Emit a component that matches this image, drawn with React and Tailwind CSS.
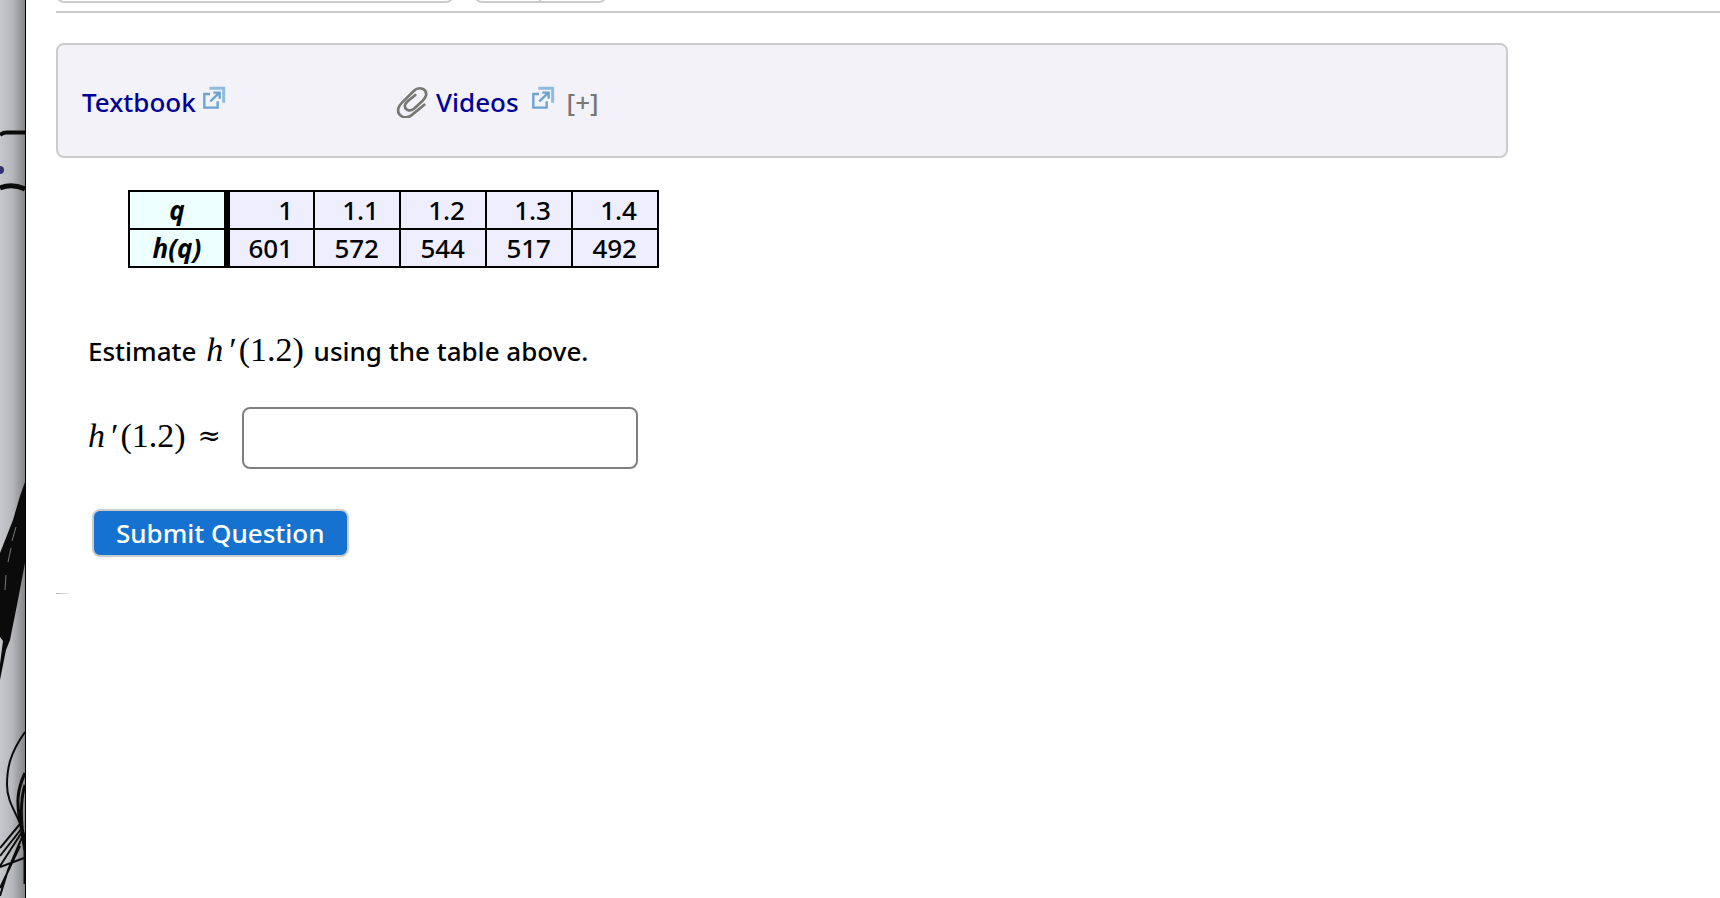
const columns = [
  { q: "1", h: "601" },
  { q: "1.1", h: "572" },
  { q: "1.2", h: "544" },
  { q: "1.3", h: "517" },
  { q: "1.4", h: "492" },
];

function ExternalIcon() {
  return (
    <svg className="mt-0.5 h-6 w-6" viewBox="18 18 72 72" fill="none" aria-hidden="true">
      <path d="M40 25H83V68" stroke="#8fbbdf" strokeWidth="9" />
      <path d="M42 42H25V83H65V64" stroke="#6ba3d0" strokeWidth="7" />
      <path d="M43 64L68 40M52 38H71V56" stroke="#6ba3d0" strokeWidth="7" />
    </svg>
  );
}

function PaperclipIcon() {
  return (
    <svg className="h-8 w-8" viewBox="12 15 96 96" fill="none" stroke="#777773" strokeWidth="8" strokeLinecap="round" aria-hidden="true">
      <path d="M97 71L58 103C38 117 14 104 19 82C21 75 25 70 30 65L65 30C82 14 106 24 102 44C100 51 96 55 92 59L66 83C52 95 34 84 40 70C41 66 44 64 47 61L70 42" />
    </svg>
  );
}

// h'(1.2) in a math face
function Derivative() {
  return (
    <span className="font-['Liberation_Serif',serif] text-[34px] leading-9 font-normal">
      <i>h</i><i className="mx-1">′</i>(1.2)
    </span>
  );
}

function Sketch() {
  return (
    <aside className="w-[26px] shrink-0 overflow-hidden border-r border-black bg-linear-to-r from-[#c6c7ca] via-[#b6b7ba] to-[#858688]">
      <svg className="block h-[898px] w-[25px]" viewBox="0 0 25 898" fill="none" stroke="#0b0b0b" aria-hidden="true">
        <path d="M0 135Q3 132 8 132.500H25" strokeWidth="4" />
        <ellipse cx="0" cy="170" rx="4" ry="4" fill="#33316f" stroke="none" />
        <path d="M0 188Q12 183 25 189" strokeWidth="5" />
        <path d="M25 482L20 496L13 520L0 553V637L3 641L0 664V680L6 650L10 640L17 605L25 563Z" fill="#0b0b0b" stroke="none" />
        <path d="M11 548L8 562M16 527L12 541M6 575L5 590" stroke="#77787a" strokeWidth="1" />
        <path d="M25 732C10 753 7 768 7 785C7 805 20 816 25 838" strokeWidth="2" />
        <path d="M25 773C17 790 16 803 21 826M25 785C20 800 20 820 25 850" strokeWidth="3" />
        <path d="M20 820L25 850V884" strokeWidth="3" />
        <path d="M20 824L0 848M22 828L0 856M22 832L0 866M20 846L0 888M23 835L8 870L0 896M0 867L24 858" strokeWidth="2" />
      </svg>
    </aside>
  );
}

export default function App() {
  return (
    <div className="flex min-h-screen bg-white font-['Noto_Sans',sans-serif] text-[26px] leading-9 font-medium text-black">
      <Sketch />
      <main className="min-w-0 flex-1 pl-[30px]">
        <div className="flex h-[3px] items-end gap-5 overflow-hidden">
          <div className="h-5 w-[398px] shrink-0 rounded-lg border-2 border-[#ccc]" />
          <div className="flex h-5 w-[133px] shrink-0 rounded-lg border-2 border-[#ccc]">
            <div className="w-1/2 border-r-2 border-[#ccc]" />
          </div>
        </div>
        <hr className="mt-2 border-t-2 border-[#ccc]" />

        <div className="mt-[30px] mr-[212px] flex items-center rounded-lg border-2 border-[#ccc] bg-[#f3f2f9] px-6 pt-[39px] pb-9">
          <div className="flex w-[314px] gap-1.5">
            <a href="#textbook" className="text-[#009]">Textbook</a>
            <ExternalIcon />
          </div>
          <div className="flex items-center">
            <PaperclipIcon />
            <a href="#videos" className="ml-2 text-[#009]">Videos</a>
            <span className="ml-3 flex h-9"><ExternalIcon /></span>
            <button type="button" className="ml-3 text-[#777]">[+]</button>
          </div>
        </div>

        <table className="mt-8 ml-[72px] border-collapse">
          <tbody>
            <tr>
              <th className="h-[38px] w-[98px] border-2 border-r-[6px] border-black bg-[#eff] p-0 text-center font-bold italic">q</th>
              {columns.map((c) => (
                <td key={c.q} className="w-[86px] border-2 border-black bg-[#eef] p-0 pr-5 text-right first-of-type:w-[87px]">{c.q}</td>
              ))}
            </tr>
            <tr>
              <th className="h-[38px] border-2 border-r-[6px] border-black bg-[#eff] p-0 text-center font-bold italic">h(q)</th>
              {columns.map((c) => (
                <td key={c.q} className="border-2 border-black bg-[#eef] p-0 pr-5 text-right">{c.h}</td>
              ))}
            </tr>
          </tbody>
        </table>

        <p className="mt-16 ml-8">
          Estimate <span className="mx-[3px]"><Derivative /></span> using the table above.
        </p>

        <div className="mt-[38px] ml-8 flex items-center">
          <label htmlFor="answer" className="flex w-[154px] items-center gap-3 pb-1">
            <Derivative /> <span className="font-['DejaVu_Serif',serif] text-[28px] font-normal">≈</span>
          </label>
          <input id="answer" type="text" className="h-[62px] w-[396px] rounded-lg border-2 border-[#808080] px-3" />
        </div>

        <button type="button" className="mt-10 ml-9 h-12 rounded-lg border-2 border-[#ccc] bg-[#1572d0] px-[22px] text-white">
          Submit Question
        </button>

        <div className="mt-9 h-px w-4 bg-linear-to-r from-[#aaa] to-white" />
      </main>
    </div>
  );
}
